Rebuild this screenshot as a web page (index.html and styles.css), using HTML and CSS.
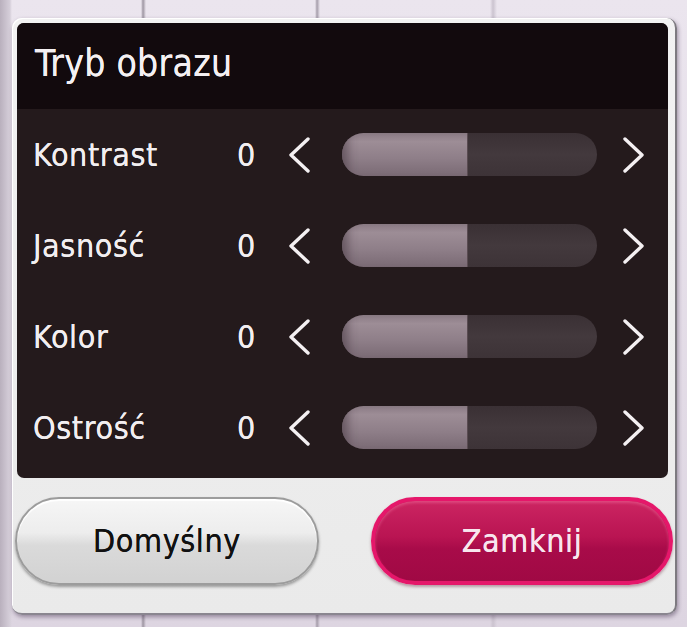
FILE: index.html
```html
<!DOCTYPE html>
<html lang="pl">
<head>
<meta charset="utf-8">
<title>Tryb obrazu</title>
<link rel="stylesheet" href="styles.css">
</head>
<body>
<div class="frame">
  <div class="panel">
    <div class="title">Tryb obrazu</div>
    <div class="rows">
      <div class="row">
        <span class="label">Kontrast</span><span class="value">0</span>
        <svg class="chev" viewBox="0 0 24 36"><polyline points="21,2 4,18 21,34"/></svg>
        <div class="track"><div class="fill"></div></div>
        <svg class="chev" viewBox="0 0 24 36"><polyline points="3,2 20,18 3,34"/></svg>
      </div>
      <div class="row">
        <span class="label">Jasność</span><span class="value">0</span>
        <svg class="chev" viewBox="0 0 24 36"><polyline points="21,2 4,18 21,34"/></svg>
        <div class="track"><div class="fill"></div></div>
        <svg class="chev" viewBox="0 0 24 36"><polyline points="3,2 20,18 3,34"/></svg>
      </div>
      <div class="row">
        <span class="label">Kolor</span><span class="value">0</span>
        <svg class="chev" viewBox="0 0 24 36"><polyline points="21,2 4,18 21,34"/></svg>
        <div class="track"><div class="fill"></div></div>
        <svg class="chev" viewBox="0 0 24 36"><polyline points="3,2 20,18 3,34"/></svg>
      </div>
      <div class="row">
        <span class="label">Ostrość</span><span class="value">0</span>
        <svg class="chev" viewBox="0 0 24 36"><polyline points="21,2 4,18 21,34"/></svg>
        <div class="track"><div class="fill"></div></div>
        <svg class="chev" viewBox="0 0 24 36"><polyline points="3,2 20,18 3,34"/></svg>
      </div>
    </div>
  </div>
  <div class="buttons">
    <button class="btn btn-default">Domyślny</button>
    <button class="btn btn-close">Zamknij</button>
  </div>
</div>
</body>
</html>
```

FILE: styles.css
```css
html, body {
  margin: 0;
  padding: 0;
}
body {
  width: 687px;
  height: 627px;
  overflow: hidden;
  background-color: #ddd5e1;
  background-image:
    linear-gradient(90deg, #b9b0bd 0, #d6cfda 10px, transparent 12px),
    linear-gradient(90deg, transparent 141px, #9e96a2 143px, transparent 146px),
    linear-gradient(90deg, transparent 315px, #a59daa 317px, transparent 320px),
    linear-gradient(90deg, transparent 490px, #cbc3cf 493px, transparent 497px),
    linear-gradient(180deg, #ebe5ee 0, #ddd5e1 100%);
  font-family: "DejaVu Sans Condensed", "Liberation Sans Narrow", "DejaVu Sans", sans-serif;
  font-stretch: condensed;
}
.frame {
  box-sizing: border-box;
  margin: 18px 0 0 12px;
  width: 665px;
  height: 597px;
  padding: 5px 7px 0 5px;
  background: linear-gradient(180deg, #f2f2f2 0%, #eaeaea 100%);
  border-radius: 10px;
  border-right: 2px solid #7d7a80;
  border-bottom: 2px solid #8a8690;
  box-shadow: 1px 2px 4px rgba(60, 40, 70, 0.45), inset 1px 1px 0 #ffffff;
  display: flex;
  flex-direction: column;
}
.panel {
  height: 455px;
  background: #241a1c;
  border-radius: 7px;
  overflow: hidden;
  display: flex;
  flex-direction: column;
}
.title {
  height: 86px;
  flex: none;
  background: #120a0d;
  color: #f4f0f2;
  font-size: 37px;
  line-height: 1;
  padding: 22px 0 0 18px;
  box-sizing: border-box;
  letter-spacing: 0.3px;
  text-shadow: 0 0 0.5px #f4f0f2;
}
.rows {
  display: flex;
  flex-direction: column;
}
.row {
  height: 91px;
  display: flex;
  align-items: center;
  padding-left: 16px;
  color: #f2eef0;
  font-size: 32px;
  letter-spacing: 0.6px;
  text-shadow: 0 0 0.5px #f2eef0;
}
.label {
  width: 204px;
  flex: none;
}
.value {
  width: 50px;
  flex: none;
}
.chev {
  width: 24px;
  height: 36px;
  flex: none;
  fill: none;
  stroke: #f4f0f2;
  stroke-width: 3.4;
  stroke-linecap: round;
  stroke-linejoin: round;
}
.track {
  margin: 0 25px 0 31px;
  width: 255px;
  height: 43px;
  flex: none;
  border-radius: 22px;
  background: linear-gradient(180deg, #3a3034 0%, #43393d 50%, #3d3337 100%);
  overflow: hidden;
  display: flex;
}
.fill {
  width: 125px;
  height: 100%;
  background: linear-gradient(180deg, #8a7a84 0%, #9d8d96 20%, #8e7e88 60%, #7a6a74 100%);
  border-right: 1px solid #5a4c52;
  box-shadow: inset 14px 0 10px -8px rgba(60, 45, 55, 0.5);
}
.buttons {
  display: flex;
  justify-content: space-between;
  margin: 19px -5px 0 -2px;
}
.btn {
  font-family: inherit;
  font-stretch: condensed;
  font-size: 32px;
  letter-spacing: 0.6px;
  height: 88px;
  border-radius: 44px;
  cursor: pointer;
  padding: 0;
}
.btn-default {
  width: 304px;
  color: #111111;
  border: 2px solid #9c9c9c;
  background: linear-gradient(180deg, #f6f6f6 0%, #ededed 40%, #dadada 55%, #d2d2d2 100%);
  box-shadow: 0 2px 3px rgba(0, 0, 0, 0.35), inset 0 2px 1px #ffffff;
  text-shadow: 0 0 0.6px #111111;
}
.btn-close {
  width: 302px;
  color: #f8e6ee;
  border: 4px solid #e5176a;
  background: linear-gradient(180deg, #cc2562 0%, #b91452 45%, #a80b49 60%, #a00944 100%);
  box-shadow: 0 2px 3px rgba(80, 0, 30, 0.35), inset 0 2px 3px rgba(255, 140, 180, 0.35);
  text-shadow: 0 0 0.5px #f8e6ee;
}
```
